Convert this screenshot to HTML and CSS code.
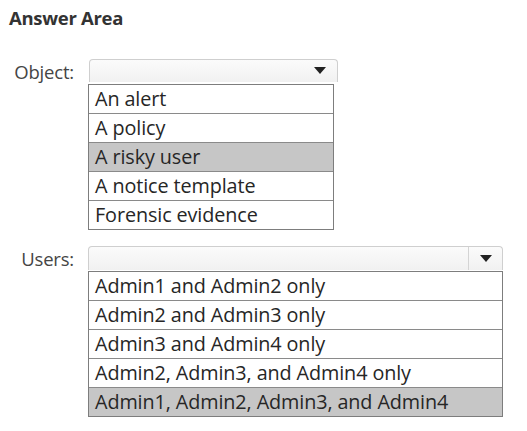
FILE: index.html
```html
<!DOCTYPE html>
<html>
<head>
<meta charset="utf-8">
<link rel="stylesheet" href="styles.css">
</head>
<body>
<div class="area">
  <h1 class="title">Answer Area</h1>
  <div class="field field-object">
    <span class="label">Object:</span>
    <div class="select select-object"><span class="btn"><span class="arrow"></span></span></div>
    <ul class="list list-object">
      <li>An alert</li>
      <li>A policy</li>
      <li class="sel">A risky user</li>
      <li>A notice template</li>
      <li>Forensic evidence</li>
    </ul>
  </div>
  <div class="field field-users">
    <span class="label">Users:</span>
    <div class="select select-users"><span class="btn btn-sep"><span class="arrow"></span></span></div>
    <ul class="list list-users">
      <li>Admin1 and Admin2 only</li>
      <li>Admin2 and Admin3 only</li>
      <li>Admin3 and Admin4 only</li>
      <li>Admin2, Admin3, and Admin4 only</li>
      <li class="sel">Admin1, Admin2, Admin3, and Admin4</li>
    </ul>
  </div>
</div>
</body>
</html>
```

FILE: styles.css
```css
* { box-sizing: border-box; }
html, body { margin: 0; padding: 0; background: #fff; }
body {
  font-family: "Open Sans", "Noto Sans", sans-serif;
  color: #2a2a2a;
  width: 527px;
  height: 431px;
  overflow: hidden;
}
.area { padding: 6px 0 0 0; }
.title {
  margin: 0 0 0 9px;
  font-size: 18.5px;
  font-weight: 700;
  line-height: 24px;
  color: #333;
  letter-spacing: -0.3px;
}
.field {
  display: grid;
  grid-template-columns: 74px auto;
  column-gap: 14px;
  justify-content: start;
}
.field-object { margin-top: 29px; }
.field-users { margin-top: 16px; }
.label {
  grid-column: 1;
  grid-row: 1;
  align-self: center;
  text-align: right;
  font-size: 18.5px;
  color: #454545;
  letter-spacing: -0.2px;
}
.select {
  grid-column: 2;
  grid-row: 1;
  height: 23px;
  border: 1px solid #cfcfcf;
  border-bottom: none;
  border-radius: 4px 4px 0 0;
  background: linear-gradient(#fbfbfb, #f1f1f1);
  display: flex;
  justify-content: flex-end;
}
.select-object { width: 249px; margin-left: 1px; }
.select-users { width: 415px; height: 24px; }
.btn {
  width: 34px;
  display: flex;
  align-items: center;
  justify-content: center;
}
.btn-sep { border-left: 1px solid #d4d4d4; }
.arrow {
  width: 0; height: 0;
  border-left: 6px solid transparent;
  border-right: 6px solid transparent;
  border-top: 7px solid #222;
  margin-top: -1px;
}
.list {
  grid-column: 2;
  grid-row: 2;
  margin: 0;
  padding: 0;
  list-style: none;
  border: 1px solid #7d7d7d;
  background: #fff;
}
.list-object { width: 246px; }
.list-users { width: 415px; }
.list li {
  height: 29px;
  line-height: 27px;
  padding-left: 6px;
  font-size: 19.8px;
  color: #262626;
  border-top: 1px solid #8a8a8a;
  letter-spacing: -0.1px;
  white-space: nowrap;
}
.list li:first-child { border-top: none; height: 28px; }
.list li.sel { background: #c6c6c6; }
```
